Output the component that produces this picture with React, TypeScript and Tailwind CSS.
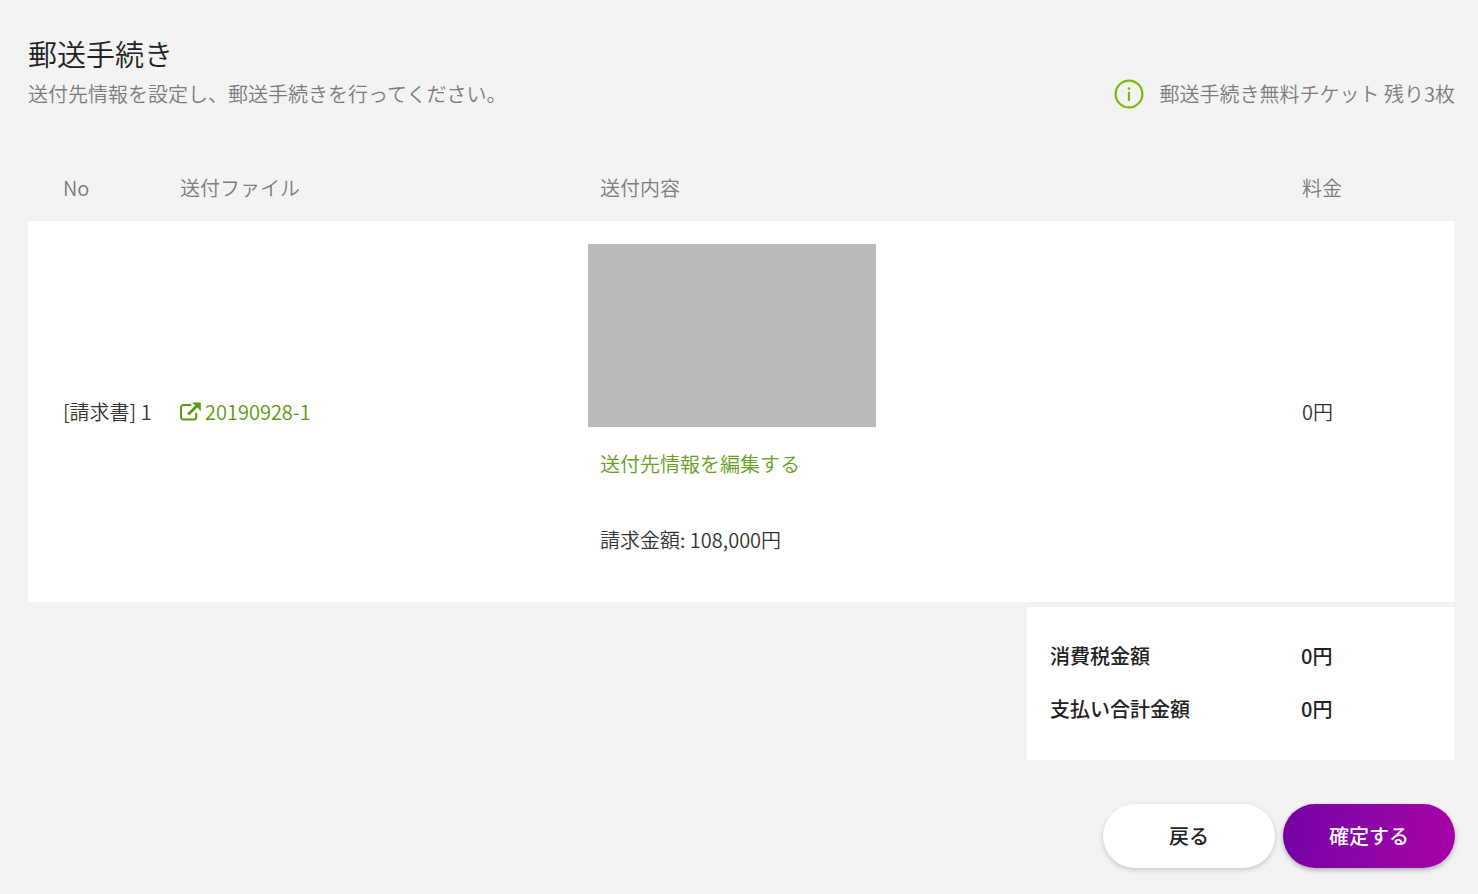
import React from 'react';

interface PostItem {
  label: string;
  fileName: string;
  amount: string;
  fee: string;
}

const items: PostItem[] = [
  { label: '[請求書] 1', fileName: '20190928-1', amount: '108,000円', fee: '0円' },
];

const totals = [
  { label: '消費税金額', value: '0円' },
  { label: '支払い合計金額', value: '0円' },
];

const InfoIcon = () => (
  <svg width="30" height="30" viewBox="0 0 30 30" fill="none" aria-hidden="true">
    <circle cx="15" cy="15" r="13.4" stroke="#7dba0c" strokeWidth="2.2" />
    <circle cx="15" cy="9.6" r="1.4" fill="#7dba0c" />
    <path d="M15 12.8V22" stroke="#7dba0c" strokeWidth="2.2" />
  </svg>
);

const ExternalIcon = () => (
  <svg width="21" height="20" viewBox="0 0 21 20" fill="none" aria-hidden="true">
    <path
      d="M10.5 2.9H3.4A2.4 2.4 0 0 0 1 5.3v9.9a2.4 2.4 0 0 0 2.4 2.4h10.4a2.4 2.4 0 0 0 2.4-2.4v-3.4"
      stroke="#5a9c0e"
      strokeWidth="2"
      strokeLinecap="round"
    />
    <path d="M8.2 12.4 17 3.8" stroke="#5a9c0e" strokeWidth="2.8" />
    <path d="M12.7 .8h7.2a.6.6 0 0 1 .6.6v7.2z" fill="#5a9c0e" stroke="#5a9c0e" strokeWidth=".6" strokeLinejoin="round" />
  </svg>
);

const App: React.FC = () => {
  return (
    <main className="min-h-screen bg-[#f3f3f3] pt-[35px] pb-6 pl-7 pr-[23px] font-['Noto_Sans_CJK_JP',sans-serif] text-[20px] leading-7 font-[350] text-[#333]">
      <h1 className="text-[29px] leading-9 font-[350] text-[#222]">郵送手続き</h1>
      <div className="mt-2 flex items-center justify-between text-[#7c7c7c]">
        <p>送付先情報を設定し、郵送手続きを行ってください。</p>
        <p className="flex items-center gap-4">
          <InfoIcon />
          郵送手続き無料チケット 残り3枚
        </p>
      </div>

      <table className="mt-[46px] w-full table-fixed text-left">
        <thead className="text-[#7c7c7c]">
          <tr>
            <th className="w-35 py-[19px] pl-[35px] font-[350]">No</th>
            <th className="w-105 px-3 font-[350]">送付ファイル</th>
            <th className="px-3 font-[350]">送付内容</th>
            <th className="w-[165px] px-3 font-[350]">料金</th>
          </tr>
        </thead>
        <tbody className="bg-white">
          {items.map((item) => (
            <tr key={item.label}>
              <td className="pl-[35px] whitespace-nowrap">{item.label}</td>
              <td className="px-3">
                <a href="#file" className="flex w-fit items-center gap-1 text-[#5a9a0c]">
                  <ExternalIcon />
                  {item.fileName}
                </a>
              </td>
              <td className="pt-[23px] pb-12">
                <div className="h-[183px] w-72 bg-[#bababa]" />
                <div className="mt-[23px] px-3">
                  <a href="#edit" className="text-[#65a01e]">送付先情報を編集する</a>
                </div>
                <p className="mt-12 px-3">請求金額: {item.amount}</p>
              </td>
              <td className="px-3">{item.fee}</td>
            </tr>
          ))}
        </tbody>
      </table>

      <dl className="mt-[5px] ml-auto w-[30%] space-y-[25px] bg-white pt-[35px] pb-[37px] pl-[23px] font-medium text-[#222]">
        {totals.map((total) => (
          <div key={total.label} className="grid grid-cols-[1fr_154px]">
            <dt>{total.label}</dt>
            <dd>{total.value}</dd>
          </div>
        ))}
      </dl>

      <div className="mt-11 flex justify-end gap-2 font-medium">
        <button type="button" className="h-16 w-43 rounded-full bg-white text-[#222] shadow-[0_2px_5px_rgba(0,0,0,0.18)]">
          戻る
        </button>
        <button
          type="button"
          className="h-16 w-43 rounded-full bg-linear-100 from-[#7400a4] to-[#a800a8] text-white shadow-[0_2px_5px_rgba(0,0,0,0.3)]"
        >
          確定する
        </button>
      </div>
    </main>
  );
};

export default App;
